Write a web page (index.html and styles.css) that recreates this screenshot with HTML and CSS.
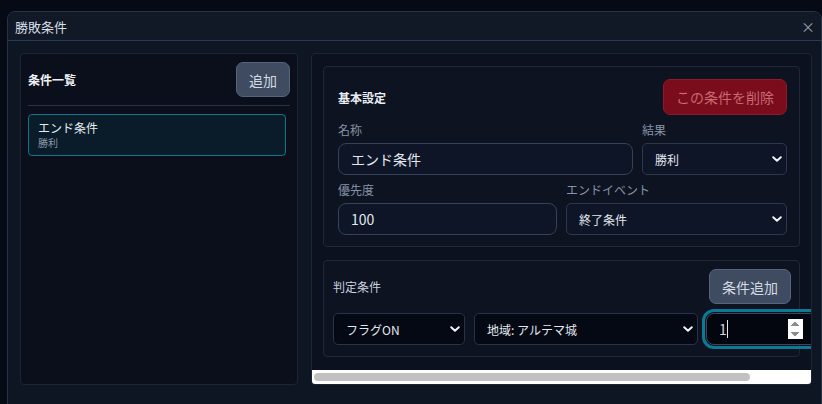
FILE: index.html
```html
<!DOCTYPE html>
<html lang="ja">
<head>
<meta charset="utf-8">
<title>勝敗条件</title>
<link rel="stylesheet" href="styles.css">
</head>
<body>
<div class="modal" role="dialog">
  <header class="modal-header">
    <h2 class="modal-title">勝敗条件</h2>
    <button class="close-btn" aria-label="閉じる">×</button>
  </header>
  <div class="modal-body">
    <aside class="list-panel">
      <div class="list-head">
        <h3 class="list-title">条件一覧</h3>
        <button class="btn btn-slate">追加</button>
      </div>
      <ul class="cond-list">
        <li class="cond-item is-active">
          <div class="cond-name">エンド条件</div>
          <div class="cond-sub">勝利</div>
        </li>
      </ul>
    </aside>
    <section class="detail-panel">
      <div class="detail-scroll">
        <div class="card card-basic">
          <div class="card-head">
            <h3 class="card-title">基本設定</h3>
            <button class="btn btn-danger">この条件を削除</button>
          </div>
          <div class="field-row cols-name">
            <label class="field">
              <span class="label">名称</span>
              <input class="input" type="text" value="エンド条件">
            </label>
            <label class="field">
              <span class="label">結果</span>
              <span class="select-wrap">
                <select class="select"><option>勝利</option><option>敗北</option></select>
                <svg class="chev" viewBox="0 0 10 6" width="10" height="6"><path d="M1.2 1.2l3.8 3.6 3.8-3.6" fill="none" stroke="#f1f5f9" stroke-width="1.9" stroke-linecap="round" stroke-linejoin="round"/></svg>
              </span>
            </label>
          </div>
          <div class="field-row cols-half">
            <label class="field">
              <span class="label">優先度</span>
              <input class="input" type="text" value="100">
            </label>
            <label class="field">
              <span class="label">エンドイベント</span>
              <span class="select-wrap">
                <select class="select"><option>終了条件</option></select>
                <svg class="chev" viewBox="0 0 10 6" width="10" height="6"><path d="M1.2 1.2l3.8 3.6 3.8-3.6" fill="none" stroke="#f1f5f9" stroke-width="1.9" stroke-linecap="round" stroke-linejoin="round"/></svg>
              </span>
            </label>
          </div>
        </div>
        <div class="card card-judge">
          <div class="judge-head">
            <h3 class="judge-title">判定条件</h3>
            <button class="btn btn-slate">条件追加</button>
          </div>
          <div class="judge-row">
            <span class="select-wrap w-type">
              <select class="select select-dark"><option>フラグON</option></select>
              <svg class="chev" viewBox="0 0 10 6" width="10" height="6"><path d="M1.2 1.2l3.8 3.6 3.8-3.6" fill="none" stroke="#f1f5f9" stroke-width="1.9" stroke-linecap="round" stroke-linejoin="round"/></svg>
            </span>
            <span class="select-wrap w-target">
              <select class="select select-dark"><option>地域: アルテマ城</option></select>
              <svg class="chev" viewBox="0 0 10 6" width="10" height="6"><path d="M1.2 1.2l3.8 3.6 3.8-3.6" fill="none" stroke="#f1f5f9" stroke-width="1.9" stroke-linecap="round" stroke-linejoin="round"/></svg>
            </span>
            <span class="num-wrap">
              <input class="input input-num is-focused" type="number" value="1">
              <span class="caret"></span>
            </span>
          </div>
        </div>
      </div>
      <div class="hscroll"><div class="hscroll-thumb"></div></div>
    </section>
  </div>
</div>
</body>
</html>
```

FILE: styles.css
```css
* { box-sizing: border-box; }

html, body {
  margin: 0;
  height: 404px;
  overflow: hidden;
}

body {
  background: #060a15;
  font-family: "Noto Sans CJK JP", "Noto Sans", sans-serif;
  color: #e2e8f0;
}

h2, h3 { margin: 0; }

button, input, select {
  font-family: inherit;
}

/* modal */
.modal {
  position: fixed;
  left: 7px;
  top: 11px;
  width: 815px;
  height: 420px;
  background: #0f1623;
  border: 1px solid #26344a;
  border-radius: 8px;
  overflow: hidden;
  display: flex;
  flex-direction: column;
}

.modal-header {
  height: 29px;
  flex: none;
  display: flex;
  align-items: center;
  justify-content: space-between;
  padding: 0 4px 0 7px;
  background: #111927;
  border-bottom: 1px solid #2a3a52;
}

.modal-title {
  font-size: 13px;
  font-weight: 400;
  color: #d8dfe8;
  line-height: 1;
}

.close-btn {
  background: none;
  border: 0;
  color: #8f9bad;
  font-size: 14px;
  line-height: 1;
  padding: 0 2px;
}

.modal-body {
  display: grid;
  grid-template-columns: 278px 501px;
  column-gap: 13px;
  padding: 12px 0 0 12px;
  align-items: start;
}

/* left list */
.list-panel {
  height: 332px;
  background: #0a0f1b;
  border: 1px solid #1b2535;
  border-radius: 4px;
  padding: 8px 7px;
}

.list-head {
  display: flex;
  align-items: center;
  justify-content: space-between;
  padding-bottom: 8px;
  border-bottom: 1px solid #253246;
}

.list-title {
  font-size: 12px;
  font-weight: 700;
  color: #eef2f7;
}

.btn {
  border-radius: 7px;
  font-size: 14px;
  line-height: 1;
  padding: 0 12px;
  cursor: pointer;
}

.btn-slate {
  height: 35px;
  background: #3e4b60;
  border: 1px solid #56657b;
  color: #d3dae4;
}

.btn-danger {
  height: 36px;
  background: #7a0c1b;
  border: 1px solid #8f1a2a;
  color: #c76a73;
}

.cond-list {
  list-style: none;
  margin: 8px 4px 0 0;
  padding: 0;
}

.cond-item {
  border: 1px solid #0e7490;
  border-radius: 4px;
  background: #0a1c29;
  padding: 5px 9px;
}

.cond-name {
  font-size: 12px;
  line-height: 16px;
  color: #e5ebf2;
}

.cond-sub {
  font-size: 10px;
  line-height: 14px;
  color: #8a97a9;
}

/* right detail */
.detail-panel {
  height: 332px;
  background: #0b111e;
  border: 1px solid #1b2535;
  border-radius: 4px;
  overflow: hidden;
  display: flex;
  flex-direction: column;
}

.detail-scroll {
  flex: 1;
  padding: 12px 11px;
  overflow: hidden;
}

.hscroll {
  flex: none;
  height: 14px;
  background: #ffffff;
  padding: 3px 2px;
}

.hscroll-thumb {
  width: 436px;
  height: 8px;
  border-radius: 4px;
  background: #c1c1c1;
}

.card {
  width: 477px;
  background: #0d1321;
  border: 1px solid #1d2839;
  border-radius: 4px;
}

.card-basic {
  padding: 12px 12px 11px 14px;
}

.card-head {
  display: flex;
  align-items: center;
  justify-content: space-between;
}

.card-title {
  font-size: 12px;
  font-weight: 700;
  color: #e8edf3;
}

.field-row {
  display: grid;
  column-gap: 9px;
  margin-top: 7px;
}

.cols-name { grid-template-columns: 295px 1fr; }
.cols-half { grid-template-columns: 219px 1fr; }

.field {
  display: flex;
  flex-direction: column;
}

.label {
  font-size: 12px;
  line-height: 16px;
  color: #8693a6;
  margin-bottom: 5px;
}

.input {
  height: 32px;
  width: 100%;
  background: #0e1526;
  border: 1px solid #34435a;
  border-radius: 8px;
  color: #e2e8f0;
  font-size: 14px;
  padding: 0 12px;
  outline: none;
}

.select-wrap {
  position: relative;
  display: block;
}

.select {
  appearance: none;
  -webkit-appearance: none;
  height: 32px;
  width: 100%;
  background: #0e1526;
  border: 1px solid #2b394e;
  border-radius: 5px;
  color: #e2e8f0;
  font-size: 12px;
  padding: 0 28px 0 12px;
  outline: none;
}

.chev {
  position: absolute;
  right: 5px;
  top: 13px;
  pointer-events: none;
}

.card-judge {
  margin-top: 13px;
  padding: 8px 8px 11px 9px;
}

.judge-head {
  display: flex;
  align-items: center;
  justify-content: space-between;
  margin-bottom: 9px;
}

.judge-title {
  font-size: 12px;
  font-weight: 400;
  color: #c9d2de;
}

.judge-row {
  display: flex;
  align-items: center;
}

.judge-row > * { flex: none; }

.w-type { width: 132px; margin-right: 9px; }
.w-target { width: 224px; margin-right: 8px; }

.select-dark {
  background: #050913;
  border-color: #26334a;
}

.num-wrap {
  position: relative;
  display: block;
  width: 112px;
}

.input-num {
  background: #03060e;
  border-color: #3a475b;
  color: #cfd7e2;
  padding: 7px 14px 7px 12px;
}

.input-num.is-focused {
  outline: 3px solid #0c7a95;
  outline-offset: 1px;
}

.input-num::-webkit-inner-spin-button {
  opacity: 1;
}

.caret {
  position: absolute;
  left: 21px;
  top: 7px;
  width: 1px;
  height: 18px;
  background: #e2e8f0;
}
```
